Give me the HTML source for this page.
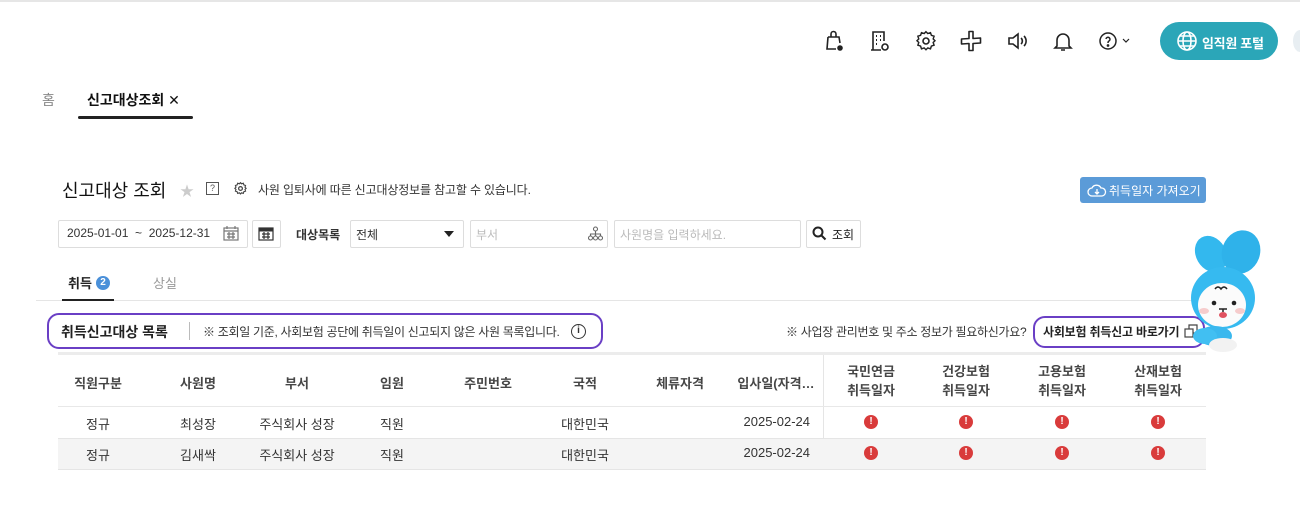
<!DOCTYPE html>
<html><head><meta charset="utf-8">
<style>
*{box-sizing:border-box;margin:0;padding:0}
body{width:1300px;height:525px;background:#fff;position:relative;overflow:hidden;font-family:"Liberation Sans","Noto Sans CJK KR",sans-serif;color:#222}
.a{position:absolute}
.t{position:absolute;white-space:nowrap}
.ic{position:absolute;top:29px}
.box{position:absolute;border:1px solid #ddd;background:#fff;border-radius:2px}
.th{position:absolute;font-size:13px;color:#333;text-align:center;font-weight:600;opacity:.9}
.td{position:absolute;font-size:13px;color:#333;text-align:center}
.err{position:absolute;width:14px;height:14px;border-radius:50%;background:#d93b3b;color:#fff;font-size:10px;font-weight:bold;text-align:center;line-height:14px}
</style></head><body>
<div class="a" style="left:0;top:0;width:1300px;height:2px;background:#e6e6e6"></div>

<!-- top icons -->
<svg class="ic" style="left:823px" width="22" height="24" viewBox="0 0 22 24" fill="none" stroke="#222" stroke-width="1.6"><path d="M5 8h11l1 6M5 8l-1 12h9M8 8V5a2.5 2.5 0 0 1 5 0v3"/><circle cx="17" cy="19" r="2" fill="#222"/></svg>
<svg class="ic" style="left:869px" width="22" height="24" viewBox="0 0 22 24" fill="none" stroke="#222" stroke-width="1.6"><path d="M4 21V3h11v9M2 21h10"/><path d="M7 7h1M11 7h1M7 11h1M11 11h1M7 15h1" stroke-width="2"/><circle cx="16" cy="18" r="3"/></svg>
<svg class="ic" style="left:915px" width="22" height="24" viewBox="0 0 22 24" fill="none" stroke="#222" stroke-width="1.6"><path d="M11 3l2 2 3-1 1 3 3 1-1 3 2 2-2 2 1 3-3 1-1 3-3-1-2 2-2-2-3 1-1-3-3-1 1-3-2-2 2-2-1-3 3-1 1-3 3 1z" transform="scale(.9) translate(1.2 0)"/><circle cx="11" cy="12" r="3"/></svg>
<svg class="ic" style="left:959px" width="24" height="24" viewBox="0 0 24 24" fill="none" stroke="#222" stroke-width="1.6"><path d="M10 2.5h4v7l7.5 -0.5v5l-7.5 .5v7h-4v-7l-7.5 .5v-5l7.5-.5z" stroke-linejoin="round"/></svg>
<svg class="ic" style="left:1006px" width="22" height="24" viewBox="0 0 22 24" fill="none" stroke="#222" stroke-width="1.6"><path d="M3 9h4l5-4v14l-5-4H3z"/><path d="M15 9a4 4 0 0 1 0 6M18 7a7 7 0 0 1 0 10"/></svg>
<svg class="ic" style="left:1052px" width="22" height="24" viewBox="0 0 22 24" fill="none" stroke="#222" stroke-width="1.6"><path d="M5 17V11a6 6 0 0 1 12 0v6l2 2H3zM9 21h4"/></svg>
<svg class="ic" style="left:1097px" width="40" height="24" viewBox="0 0 40 24" fill="none" stroke="#222" stroke-width="1.5"><circle cx="11" cy="12" r="8"/><path d="M9 10a2 2 0 1 1 3 2c-1 .5-1 1-1 2"/><circle cx="11" cy="16.5" r=".6" fill="#222"/><path d="M26 10l3 3 3-3" stroke-width="1.2"/></svg>
<div class="a" style="left:1160px;top:22px;width:118px;height:38px;border-radius:19px;background:#2ba6b8"></div>
<svg class="a" style="left:1176px;top:30px" width="22" height="22" viewBox="0 0 22 22" fill="none" stroke="#fff" stroke-width="1.6"><circle cx="11" cy="11" r="9"/><ellipse cx="11" cy="11" rx="4" ry="9"/><path d="M2 11h18M4 6h14M4 16h14"/></svg>
<div class="t" style="left:1202px;top:33px;font-size:13px;color:#fff;font-weight:bold;letter-spacing:-0.3px">임직원 포털</div>
<div class="a" style="left:1293px;top:30px;width:14px;height:22px;border-radius:50%;background:#e8eef2"></div>

<!-- tabs -->
<div class="t" style="left:42px;top:90px;font-size:14px;color:#888">홈</div>
<div class="t" style="left:87px;top:90px;font-size:14px;color:#111;font-weight:bold">신고대상조회 <span style="font-weight:normal">✕</span></div>
<div class="a" style="left:78px;top:116px;width:115px;height:3px;background:#222;border-radius:2px"></div>

<!-- title -->
<div class="t" style="left:62px;top:177px;font-size:18px;color:#111">신고대상 조회</div>
<div class="t" style="left:180px;top:181px;font-size:14px;color:#ccc">★</div>
<div class="a" style="left:206px;top:182px;width:13px;height:13px;border:1.3px solid #555;font-size:9px;text-align:center;line-height:11px;color:#555">?</div>
<svg class="a" style="left:233px;top:181px" width="15" height="15" viewBox="0 0 22 24" fill="none" stroke="#444" stroke-width="2"><path d="M11 3l2 2 3-1 1 3 3 1-1 3 2 2-2 2 1 3-3 1-1 3-3-1-2 2-2-2-3 1-1-3-3-1 1-3-2-2 2-2-1-3 3-1 1-3 3 1z" transform="scale(.9) translate(1.2 0)"/><circle cx="11" cy="12" r="3"/></svg>
<div class="t" style="left:258px;top:181px;font-size:12px;color:#333;letter-spacing:-0.15px">사원 입퇴사에 따른 신고대상정보를 참고할 수 있습니다.</div>
<div class="a" style="left:1080px;top:177px;width:126px;height:26px;background:#5b9bd8;border-radius:3px"></div>
<svg class="a" style="left:1087px;top:183px" width="20" height="14" viewBox="0 0 20 14" fill="none" stroke="#fff" stroke-width="1.3"><path d="M5 13a4 4 0 0 1 0-8 5 5 0 0 1 9 0 4 4 0 0 1 1 8z"/><path d="M10 6v5M8 9l2 2 2-2"/></svg>
<div class="t" style="left:1109px;top:182px;font-size:12px;color:#fff">취득일자 가져오기</div>

<!-- filters -->
<div class="box" style="left:58px;top:220px;width:190px;height:28px"></div>
<div class="t" style="left:67px;top:226px;font-size:12px;color:#333">2025-01-01 &nbsp;~ &nbsp;2025-12-31</div>
<svg class="a" style="left:223px;top:226px" width="16" height="15" viewBox="0 0 16 15" fill="none" stroke="#777" stroke-width="1.2"><rect x="1" y="2" width="14" height="12"/><path d="M1 5h14M4 0v3M12 0v3M4 8h8M4 11h8M6 6v7M10 6v7"/></svg>
<div class="box" style="left:252px;top:220px;width:29px;height:28px"></div>
<svg class="a" style="left:258px;top:226px" width="16" height="15" viewBox="0 0 16 15" fill="none" stroke="#333" stroke-width="1.2"><rect x="1" y="2" width="14" height="12"/><path d="M1 4h14" stroke-width="3"/><path d="M4 8h8M4 11h8M6 6v7M10 6v7"/></svg>
<div class="t" style="left:296px;top:226px;font-size:12px;font-weight:bold;color:#333">대상목록</div>
<div class="box" style="left:350px;top:220px;width:114px;height:28px"></div>
<div class="t" style="left:356px;top:226px;font-size:12px;color:#333">전체</div>
<svg class="a" style="left:444px;top:231px" width="10" height="6" viewBox="0 0 10 6"><path d="M0 0h10L5 6z" fill="#222"/></svg>
<div class="box" style="left:470px;top:220px;width:138px;height:28px"></div>
<div class="t" style="left:476px;top:226px;font-size:12px;color:#bbb">부서</div>
<svg class="a" style="left:588px;top:226px" width="15" height="15" viewBox="0 0 15 15" fill="none" stroke="#666" stroke-width="1.1"><circle cx="7.5" cy="3" r="2"/><circle cx="2.5" cy="12" r="2"/><circle cx="7.5" cy="12" r="2"/><circle cx="12.5" cy="12" r="2"/><path d="M7.5 5v5M2.5 10V8h10v2"/></svg>
<div class="box" style="left:614px;top:220px;width:187px;height:28px"></div>
<div class="t" style="left:620px;top:226px;font-size:12px;color:#bbb">사원명을 입력하세요.</div>
<div class="box" style="left:806px;top:220px;width:55px;height:28px"></div>
<svg class="a" style="left:812px;top:226px" width="15" height="15" viewBox="0 0 15 15" fill="none" stroke="#222" stroke-width="2"><circle cx="6" cy="6" r="4.5"/><path d="M9.5 9.5l4 4"/></svg>
<div class="t" style="left:832px;top:226px;font-size:12px;color:#222">조회</div>

<!-- sub tabs -->
<div class="t" style="left:68px;top:273px;font-size:13px;color:#222;font-weight:bold">취득</div>
<div class="a" style="left:96px;top:276px;width:14px;height:14px;border-radius:50%;background:#4a90d9;color:#fff;font-size:10px;font-weight:bold;text-align:center;line-height:14px">2</div>
<div class="t" style="left:153px;top:273px;font-size:13px;color:#999">상실</div>
<div class="a" style="left:36px;top:300px;width:1170px;height:1px;background:#e5e5e5"></div>
<div class="a" style="left:62px;top:299px;width:52px;height:2px;background:#222"></div>

<!-- section header -->
<div class="a" style="left:47px;top:313px;width:556px;height:36px;border:2.5px solid #6a3fc5;border-radius:12px"></div>
<div class="t" style="left:61px;top:322px;font-size:14px;font-weight:bold;color:#222">취득신고대상 목록</div>
<div class="a" style="left:189px;top:322px;width:1px;height:18px;background:#bbb"></div>
<div class="t" style="left:203px;top:323px;font-size:12px;color:#333;letter-spacing:-0.3px">※ 조회일 기준, 사회보험 공단에 취득일이 신고되지 않은 사원 목록입니다.</div>
<div class="a" style="left:571px;top:324px;width:15px;height:15px;border:1.4px solid #333;border-radius:50%;font-size:10px;text-align:center;line-height:12px;font-weight:bold;color:#333">i</div>
<div class="t" style="left:786px;top:323px;font-size:12px;color:#333;letter-spacing:-0.3px">※ 사업장 관리번호 및 주소 정보가 필요하신가요?</div>
<div class="a" style="left:1033px;top:316px;width:172px;height:32px;border:2.5px solid #6a3fc5;border-radius:12px"></div>
<div class="t" style="left:1043px;top:323px;font-size:12px;color:#222;font-weight:bold;letter-spacing:-0.2px">사회보험 취득신고 바로가기</div>
<svg class="a" style="left:1184px;top:324px" width="15" height="14" viewBox="0 0 15 14" fill="none" stroke="#444" stroke-width="1.2"><rect x="1" y="5" width="8" height="8"/><path d="M5 5V1h8v8H9"/></svg>

<!-- table -->
<div class="a" style="left:58px;top:352px;width:1148px;height:3px;background:#ececec"></div>
<div class="a" style="left:823px;top:355px;width:1px;height:115px;background:#e5e5e5"></div>
<div class="a" style="left:58px;top:406px;width:1148px;height:1px;background:#e8e8e8"></div>
<div class="a" style="left:58px;top:438px;width:1148px;height:32px;background:#f4f4f4;border-top:1px solid #e5e5e5;border-bottom:1px solid #e5e5e5"></div>

<div class="th" style="left:48px;top:373px;width:100px">직원구분</div>
<div class="th" style="left:148px;top:373px;width:100px">사원명</div>
<div class="th" style="left:247px;top:373px;width:100px">부서</div>
<div class="th" style="left:342px;top:373px;width:100px">임원</div>
<div class="th" style="left:438px;top:373px;width:100px">주민번호</div>
<div class="th" style="left:535px;top:373px;width:100px">국적</div>
<div class="th" style="left:630px;top:373px;width:100px">체류자격</div>
<div class="th" style="left:726px;top:373px;width:100px">입사일(자격…</div>
<div class="th" style="left:821px;top:362px;width:100px;line-height:19px">국민연금<br>취득일자</div>
<div class="th" style="left:916px;top:362px;width:100px;line-height:19px">건강보험<br>취득일자</div>
<div class="th" style="left:1012px;top:362px;width:100px;line-height:19px">고용보험<br>취득일자</div>
<div class="th" style="left:1108px;top:362px;width:100px;line-height:19px">산재보험<br>취득일자</div>

<div class="td" style="left:48px;top:414px;width:100px">정규</div>
<div class="td" style="left:148px;top:414px;width:100px">최성장</div>
<div class="td" style="left:247px;top:414px;width:100px">주식회사 성장</div>
<div class="td" style="left:342px;top:414px;width:100px">직원</div>
<div class="td" style="left:535px;top:414px;width:100px">대한민국</div>
<div class="td" style="left:730px;top:414px;width:80px;text-align:right">2025-02-24</div>
<div class="td" style="left:48px;top:445px;width:100px">정규</div>
<div class="td" style="left:148px;top:445px;width:100px">김새싹</div>
<div class="td" style="left:247px;top:445px;width:100px">주식회사 성장</div>
<div class="td" style="left:342px;top:445px;width:100px">직원</div>
<div class="td" style="left:535px;top:445px;width:100px">대한민국</div>
<div class="td" style="left:730px;top:445px;width:80px;text-align:right">2025-02-24</div>

<div class="err" style="left:864px;top:415px">!</div>
<div class="err" style="left:959px;top:415px">!</div>
<div class="err" style="left:1055px;top:415px">!</div>
<div class="err" style="left:1151px;top:415px">!</div>
<div class="err" style="left:864px;top:446px">!</div>
<div class="err" style="left:959px;top:446px">!</div>
<div class="err" style="left:1055px;top:446px">!</div>
<div class="err" style="left:1151px;top:446px">!</div>

<!-- mascot -->
<svg class="a" style="left:1185px;top:228px" width="80" height="125" viewBox="0 0 80 125">
<ellipse cx="26" cy="26" rx="15" ry="19" fill="#33b8ee" transform="rotate(-30 26 26)"/>
<ellipse cx="56" cy="24" rx="19" ry="22" fill="#2fb2ea" transform="rotate(20 56 24)"/>
<ellipse cx="38" cy="70" rx="32" ry="31" fill="#36baf0"/>
<ellipse cx="37" cy="77" rx="24" ry="22" fill="#fbfbfb"/>
<ellipse cx="19" cy="83" rx="5" ry="3" fill="#f6cccc"/>
<ellipse cx="55" cy="83" rx="5" ry="3" fill="#f6cccc"/>
<circle cx="29" cy="75" r="2.3" fill="#222"/><circle cx="49" cy="75" r="2.3" fill="#222"/>
<path d="M34 81h8M38 81v3" stroke="#222" stroke-width="1.5"/>
<ellipse cx="38" cy="87" rx="4" ry="3" fill="#e05260"/>
<path d="M30 61q3-4 6 0q3-4 6 0" stroke="#222" stroke-width="1.5" fill="none"/>
<ellipse cx="30" cy="108" rx="17" ry="10" fill="#3ab8ee"/>
<ellipse cx="20" cy="108" rx="12" ry="8" fill="#41bff2"/>
<ellipse cx="38" cy="117" rx="14" ry="7" fill="#f2f2f2"/>
</svg>
</body></html>
